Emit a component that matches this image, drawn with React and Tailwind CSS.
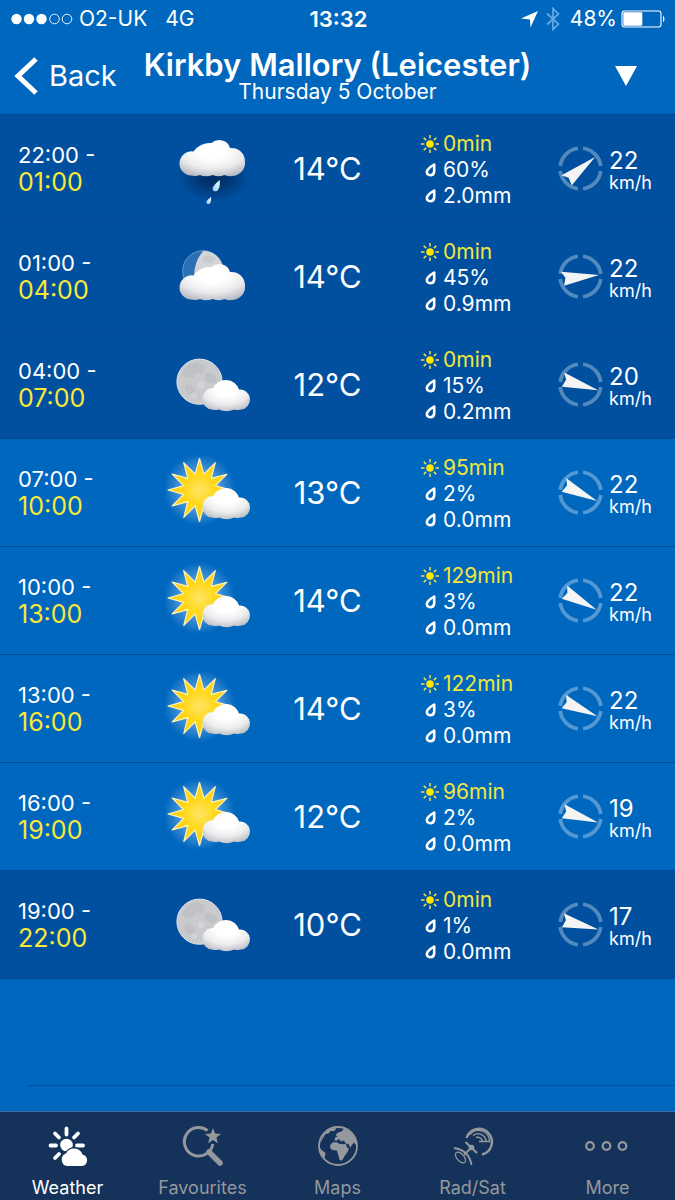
import { useState } from "react";

const forecast = [
  { from: "22:00", to: "01:00", icon: "rain", temp: 14, sun: "0min", chance: "60%", rain: "2.0mm", wind: 22, angle: -38, night: true },
  { from: "01:00", to: "04:00", icon: "cloudyMoon", temp: 14, sun: "0min", chance: "45%", rain: "0.9mm", wind: 22, angle: -5, night: true },
  { from: "04:00", to: "07:00", icon: "moon", temp: 12, sun: "0min", chance: "15%", rain: "0.2mm", wind: 20, angle: 18, night: true },
  { from: "07:00", to: "10:00", icon: "sun", temp: 13, sun: "95min", chance: "2%", rain: "0.0mm", wind: 22, angle: 27, night: false },
  { from: "10:00", to: "13:00", icon: "sun", temp: 14, sun: "129min", chance: "3%", rain: "0.0mm", wind: 22, angle: 30, night: false },
  { from: "13:00", to: "16:00", icon: "sun", temp: 14, sun: "122min", chance: "3%", rain: "0.0mm", wind: 22, angle: 25, night: false },
  { from: "16:00", to: "19:00", icon: "sun", temp: 12, sun: "96min", chance: "2%", rain: "0.0mm", wind: 19, angle: 19, night: false },
  { from: "19:00", to: "22:00", icon: "moon", temp: 10, sun: "0min", chance: "1%", rain: "0.0mm", wind: 17, angle: 16, night: true },
];

function burst(cx, cy, outer, inner, count) {
  const points = [];
  for (let i = 0; i < count * 2; i++) {
    const r = i % 2 === 0 ? outer : inner;
    const a = (Math.PI * i) / count - Math.PI / 2;
    points.push(`${(cx + r * Math.cos(a)).toFixed(1)},${(cy + r * Math.sin(a)).toFixed(1)}`);
  }
  return points.join(" ");
}

// Gradients shared by every weather icon on the page
function IconDefs() {
  return (
    <svg width="0" height="0" className="absolute" aria-hidden="true">
      <defs>
        <radialGradient id="cloudFill" cx="0.5" cy="0.3" r="0.75">
          <stop offset="0.3" stopColor="#ffffff" />
          <stop offset="0.65" stopColor="#ececee" />
          <stop offset="1" stopColor="#b6b9bf" />
        </radialGradient>
        <radialGradient id="sunFill">
          <stop offset="0" stopColor="#ffe566" />
          <stop offset="0.45" stopColor="#ffd91f" />
          <stop offset="1" stopColor="#ffcb05" />
        </radialGradient>
        <radialGradient id="sunGlow">
          <stop offset="0.5" stopColor="#8cc4f5" stopOpacity="0.55" />
          <stop offset="1" stopColor="#8cc4f5" stopOpacity="0" />
        </radialGradient>
        <radialGradient id="rainShadow">
          <stop offset="0.2" stopColor="#001f4d" stopOpacity="0.7" />
          <stop offset="1" stopColor="#001f4d" stopOpacity="0" />
        </radialGradient>
        <linearGradient id="dropFill" x1="1" y1="0" x2="0" y2="1">
          <stop offset="0" stopColor="#ffffff" />
          <stop offset="1" stopColor="#8cc8f5" />
        </linearGradient>
      </defs>
    </svg>
  );
}

function SmallCloud() {
  return (
    <path
      d="M47 64.500 A10 10 0 0 1 37.500 54 A10.500 10.500 0 0 1 48 43 A14 14 0 0 1 74 44.600 A10 10 0 0 1 76 64.500 Q72 65.500 69.500 64.500 Q61 68 54 64.500 Q50 65.500 47 64.500 Z"
      fill="url(#cloudFill)"
    />
  );
}

function BigCloud() {
  return (
    <path
      d="M26 46.500 A12 12 0 0 1 14.500 34.500 A12 12 0 0 1 28.500 22.500 A19 17 0 0 1 46.500 14 A11 10 0 0 1 65 19 A13.500 13.500 0 0 1 80 33 A13 13 0 0 1 67 47 Q62 47.500 59.500 46 Q53 48.500 48 46 Q40 48.500 35 46 Q31 47.500 26 46.500 Z"
      fill="url(#cloudFill)"
    />
  );
}

function Moon() {
  return (
    <>
      <circle cx="34.500" cy="36.700" r="22.600" fill="#c8cacc" stroke="#e2e4e6" strokeWidth="1" />
      <path d="M24 20 Q31 15 38 20 Q42 25 36 28 Q30 26 28 32 Q20 34 17 29 Q19 24 24 20 Z" fill="#b6b8bc" opacity="0.500" />
      <path d="M40 28 Q48 26 52 34 Q50 40 44 37 Q39 36 40 28 Z M20 40 Q28 38 30 45 Q27 52 21 48 Z" fill="#b6b8bc" opacity="0.500" />
      <circle cx="36" cy="40" r="3.500" fill="#d7d9dc" opacity="0.700" />
      <circle cx="29" cy="51" r="3" fill="#d4d6d9" opacity="0.700" />
    </>
  );
}

function WeatherIcon({ type }) {
  return (
    <svg viewBox="0 0 90 80" className="w-[90px] h-20" role="img" aria-label={type}>
      {type === "rain" && (
        <>
          <ellipse cx="49" cy="48" rx="36" ry="25" fill="url(#rainShadow)" />
          <BigCloud />
          <path d="M54.700 51 Q55.500 60 51.500 62.200 Q48 63 47.500 59.500 Q48.500 56 54.700 51 Z" fill="url(#dropFill)" />
          <path d="M46 68 Q46.500 73.500 44 75 Q41.500 75.500 41.200 73 Q42 71 46 68 Z" fill="url(#dropFill)" />
        </>
      )}
      {type === "cloudyMoon" && (
        <>
          <circle cx="38" cy="34" r="20.300" fill="#2b6fb5" stroke="#7ba6d3" strokeWidth="0.800" />
          <path d="M38.500 13.700 A20.300 20.300 0 0 1 58 38 L29 40 Q29 24 38.500 13.700 Z" fill="#d3d5d8" />
          <path d="M38 20 Q45 16 50 22 Q46 28 38 25 Z" fill="#bdbfc4" opacity="0.500" />
          <g transform="translate(0 16)">
            <BigCloud />
          </g>
        </>
      )}
      {type === "moon" && (
        <>
          <Moon />
          <SmallCloud />
        </>
      )}
      {type === "sun" && (
        <>
          <circle cx="34.500" cy="37" r="36" fill="url(#sunGlow)" />
          <polygon
            points={burst(34.5, 37, 31.5, 16.5, 12)}
            fill="url(#sunFill)"
            stroke="#fff3b8"
            strokeWidth="1.200"
            strokeLinejoin="round"
          />
          <SmallCloud />
        </>
      )}
    </svg>
  );
}

function SunGlyph() {
  return (
    <svg viewBox="0 0 18 18" className="w-[18px] h-[18px]" aria-hidden="true">
      <circle cx="9" cy="9" r="3.800" fill="#ffe600" />
      <path
        d="M9 0V3.500M9 14.500V18M0 9H3.500M14.500 9H18M2.700 2.700L5.100 5.100M12.900 12.900L15.300 15.300M2.700 15.300L5.100 12.900M12.900 5.100L15.300 2.700"
        stroke="#f5e04a"
        strokeWidth="1.500"
      />
    </svg>
  );
}

function DropGlyph() {
  return (
    <svg viewBox="0 0 18 18" className="w-[18px] h-[18px]" aria-hidden="true">
      <path
        d="M13.200 3.500 V10.500 Q12.800 14.200 9.200 14.200 Q5.700 14 5.900 10.600 Q6.500 7.500 13.200 3.500 Z"
        fill="none"
        stroke="#ffffff"
        strokeWidth="2.600"
        strokeLinejoin="round"
      />
    </svg>
  );
}

function Compass({ angle }) {
  return (
    <svg viewBox="-23 -23 46 46" className="w-[45px] h-[45px] shrink-0" role="img" aria-label="Wind direction">
      <g fill="none" stroke="#ffffff" strokeOpacity="0.330" strokeWidth="3.800">
        <path d="M2.600 -20.700 A20.900 20.900 0 0 1 20.700 -2.600" />
        <path d="M20.700 2.600 A20.900 20.900 0 0 1 2.600 20.700" />
        <path d="M-2.600 20.700 A20.900 20.900 0 0 1 -20.700 2.600" />
        <path d="M-20.700 -2.600 A20.900 20.900 0 0 1 -2.600 -20.700" />
      </g>
      <g transform={`rotate(${angle})`}>
        <path d="M19 0 L-19.500 -6.500 L-15.500 0 L-17.500 8 Z" fill="#f4f4f4" />
      </g>
    </svg>
  );
}

function ForecastRow({ item }) {
  return (
    <li
      className={`grid grid-cols-[165fr_90fr_145fr_158fr_117fr] items-center h-[108px] border-b border-[#004a94] ${
        item.night ? "bg-[#00509f]" : "bg-[#0067be]"
      }`}
    >
      <div className="pl-[18px]">
        <p className="text-[22px] leading-[26px]">{item.from} -</p>
        <p className="text-[25px] leading-7 text-[#f8e839]">{item.to}</p>
      </div>
      <WeatherIcon type={item.icon} />
      <p className="text-center text-[31px] leading-9">{item.temp}°C</p>
      <div className="pl-[21px] pt-0.5 text-[21px] leading-[26px]">
        <p className="flex items-center gap-1 text-[#f0e63c]">
          <SunGlyph />
          {item.sun}
        </p>
        <p className="flex items-center gap-1">
          <DropGlyph />
          {item.chance}
        </p>
        <p className="flex items-center gap-1">
          <DropGlyph />
          {item.rain}
        </p>
      </div>
      <div className="flex items-center gap-1.5">
        <Compass angle={item.angle} />
        <div className="pt-1">
          <p className="text-2xl leading-6">{item.wind}</p>
          <p className="text-lg leading-5">km/h</p>
        </div>
      </div>
    </li>
  );
}

function StatusBar() {
  return (
    <div className="grid grid-cols-[1fr_auto_1fr] items-center h-[38px] pl-[11px] pr-[9px] text-[21px] leading-6">
      <div className="flex items-center">
        <svg viewBox="0 0 62 12" className="w-[62px] h-3" aria-hidden="true">
          <circle cx="5.500" cy="6" r="5.200" fill="#fff" />
          <circle cx="18" cy="6" r="5.200" fill="#fff" />
          <circle cx="30.500" cy="6" r="5.200" fill="#fff" />
          <circle cx="43.500" cy="6" r="4.800" fill="none" stroke="#fff" strokeWidth="0.900" />
          <circle cx="56" cy="6" r="4.800" fill="none" stroke="#fff" strokeWidth="0.900" />
        </svg>
        <span className="ml-1.5">O2-UK</span>
        <span className="ml-[18px]">4G</span>
      </div>
      <span className="text-[22px] font-semibold">13:32</span>
      <div className="flex items-center justify-end">
        <svg viewBox="0 0 18 18" className="w-[18px] h-[18px]" aria-hidden="true">
          <path d="M18 1 L10.500 17.500 L10 9.500 L1 8.500 Z" fill="#fff" />
        </svg>
        <svg viewBox="0 0 14 24" className="w-3.5 h-6 ml-2 mr-2.5" aria-hidden="true">
          <path d="M1 6.500 L12.500 17 L7 22.500 V1.500 L12.500 7 L1 17.500" fill="none" stroke="#69a8e2" strokeWidth="1.700" />
        </svg>
        <span>48%</span>
        <svg viewBox="0 0 45 18" className="w-[45px] h-[18px] ml-1" aria-hidden="true">
          <rect x="1" y="1" width="39" height="16" rx="2.500" fill="none" stroke="#fff" strokeWidth="1.100" />
          <rect x="2.300" y="2.300" width="19" height="13.400" rx="1" fill="#fff" />
          <path d="M42 5.500 Q45 9 42 12.500 Z" fill="#fff" />
        </svg>
      </div>
    </div>
  );
}

function Header() {
  return (
    <header className="grid grid-cols-[1fr_auto_1fr] items-center h-[77px] px-3.5 border-b border-[#004a94]">
      <button type="button" className="flex items-center gap-2.5 text-[29px] leading-8">
        <svg viewBox="0 0 25 38" className="w-[25px] h-[38px]" aria-hidden="true">
          <path d="M22 2 L4 19 L22 36" fill="none" stroke="#fff" strokeWidth="5" />
        </svg>
        Back
      </button>
      <div className="text-center pt-0.5">
        <h1 className="text-[31px] leading-[30px] font-semibold">Kirkby Mallory (Leicester)</h1>
        <p className="text-[21px] leading-6">Thursday 5 October</p>
      </div>
      <button type="button" aria-label="Choose day" className="justify-self-end mr-6">
        <svg viewBox="0 0 22 20" className="w-[22px] h-5" aria-hidden="true">
          <path d="M0 0 H22 L11 20 Z" fill="#fff" />
        </svg>
      </button>
    </header>
  );
}

const tabIcons = {
  Weather: (
    <>
      <g stroke="currentColor" strokeWidth="3.800" strokeLinecap="round">
        <path d="M18.500 2.500V8.500M7 7.500L11 11.500M30 7.500L26 11.500M2.500 19.500H8M29 19.500H35M7 32L11 28" />
      </g>
      <circle cx="18.500" cy="19" r="6.300" fill="currentColor" />
      <path
        d="M19 40 A6.500 6.500 0 0 1 18 27.500 A9 9 0 0 1 34.500 28.500 A5.900 5.900 0 0 1 34.500 40 Z"
        fill="currentColor"
        stroke="#15335a"
        strokeWidth="2.400"
        paintOrder="stroke"
      />
    </>
  ),
  Favourites: (
    <>
      <path d="M24.500 4.500 A14.300 14.300 0 1 0 29.800 18" fill="none" stroke="currentColor" strokeWidth="3" />
      <path d="M26 26 L37 37" stroke="currentColor" strokeWidth="5.500" strokeLinecap="round" />
      <polygon points={burst(30, 10.5, 8.4, 3.6, 5)} fill="currentColor" />
    </>
  ),
  Maps: (
    <>
      <circle cx="20" cy="20" r="19" fill="none" stroke="currentColor" strokeWidth="1.800" />
      <path
        d="M12.500 18.500 L15 16.300 L19 16.300 L21 17.800 L25.500 18.300 L28 18 L29 21.500 L31 22.500 L29.500 26 L27 29.500 L24 34.500 L21.500 34 L20 28 L18.800 24.500 L14 24 L12 21.500 Z"
        fill="currentColor"
      />
      <path
        d="M16.500 14.500 L17 11.500 L19.500 10.500 L17.500 9 L20 6.500 L23.500 5.500 L26 2.500 L33 6.500 L38.500 15 L38.500 19.500 L36 16.500 L33.500 19.500 L32.500 22 L30.500 18 L27.500 17.500 L26 14.500 L23 15.500 L21 13 L18.500 14.800 Z"
        fill="currentColor"
      />
      <path d="M5.500 8.500 L12 3 L18.500 1.500 L16.500 5 L12.500 5 L10.500 7.500 L7.500 8 L4 14 L1.500 18 Z" fill="currentColor" />
      <path d="M1 20 L3 23.500 L7.500 27 L6.500 32 L3.500 29 Z" fill="currentColor" />
    </>
  ),
  "Rad/Sat": (
    <g fill="none" stroke="currentColor">
      <path d="M13.500 12 A13 13 0 1 1 29 28.500" strokeWidth="2.400" />
      <path d="M16.500 9 A11 11 0 0 1 36.500 15.500 H26 M20 9.500 A8 8 0 0 1 33 15 M23 11.500 A5 5 0 0 1 29.500 15" strokeWidth="1.400" />
      <path d="M12.500 16 L24 27" strokeWidth="2.200" />
      <circle cx="18.500" cy="21.500" r="2.800" fill="currentColor" stroke="none" />
      <path d="M17 23 L11 29 M1 22 Q16 24 18.500 39" strokeWidth="1.800" />
      <ellipse cx="7.500" cy="31.500" rx="3.500" ry="6.500" transform="rotate(-42 7.500 31.500)" strokeWidth="1.200" />
    </g>
  ),
  More: (
    <g fill="none" stroke="currentColor" strokeWidth="2.200">
      <circle cx="2" cy="20" r="3.800" />
      <circle cx="18.500" cy="20" r="3.800" />
      <circle cx="34.500" cy="20" r="3.800" />
    </g>
  ),
};

function TabBar({ active, onSelect }) {
  return (
    <nav className="grid grid-cols-5 h-[89px] pt-3.5 border-t border-[#3a6ea8] bg-[#15335a]">
      {Object.keys(tabIcons).map((name) => (
        <button
          key={name}
          type="button"
          onClick={() => onSelect(name)}
          className={`flex flex-col items-center gap-2.5 ${
            active === name ? "text-white" : "text-[#95989c]"
          }`}
        >
          <svg viewBox="0 0 40 40" className="w-10 h-10 overflow-visible" aria-hidden="true">
            {tabIcons[name]}
          </svg>
          <span className="text-lg leading-6">{name}</span>
        </button>
      ))}
    </nav>
  );
}

function App() {
  const [tab, setTab] = useState("Weather");

  return (
    <div className="min-h-screen flex flex-col bg-[#0067be] text-white font-['Inter','Liberation_Sans',sans-serif]">
      <IconDefs />
      <StatusBar />
      <Header />
      <main className="flex-1">
        <ul>
          {forecast.map((item) => (
            <ForecastRow key={item.from} item={item} />
          ))}
        </ul>
        <div className="h-[107px] ml-7 border-b border-[#004f9c]" />
      </main>
      <TabBar active={tab} onSelect={setTab} />
    </div>
  );
}

export default App;
